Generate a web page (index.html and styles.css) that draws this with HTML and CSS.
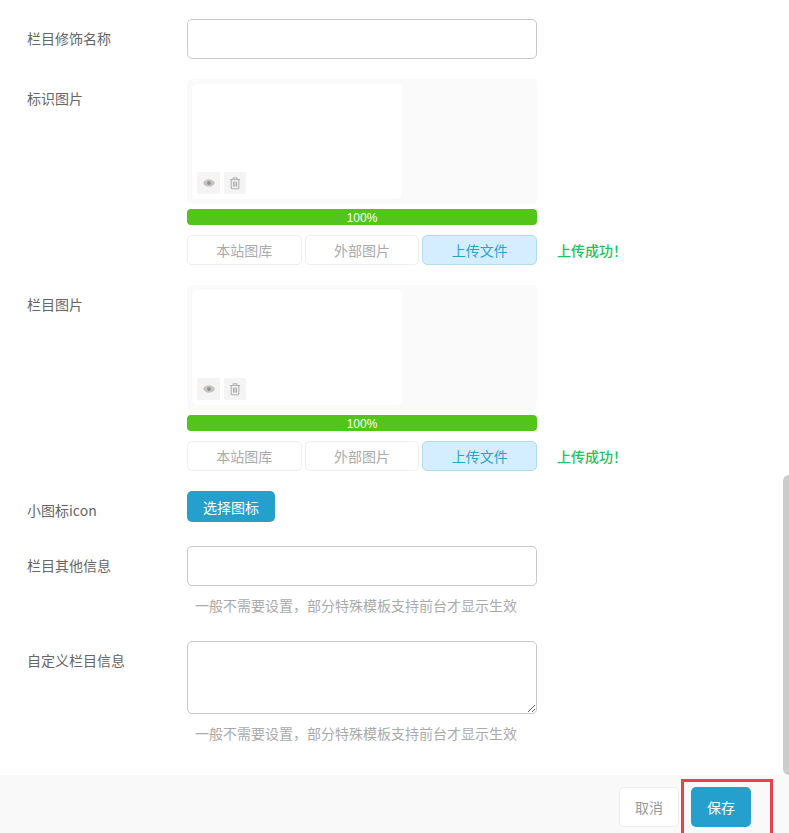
FILE: index.html
```html
<!DOCTYPE html>
<html lang="zh-CN">
<head>
<meta charset="utf-8">
<title>栏目设置</title>
<link rel="stylesheet" href="styles.css">
</head>
<body>
<div class="page">
  <form class="form">
    <div class="row">
      <label class="label label-input">栏目修饰名称</label>
      <div class="control"><input class="input" type="text"></div>
    </div>
    <div class="row">
      <label class="label label-top">标识图片</label>
      <div class="control-wide">
        <div class="control">
          <div class="preview">
            <div class="thumb">
              <span class="tool"><svg class="icon" viewBox="0 0 14 14"><path class="eye" d="M1 7c1.6-2.6 3.6-3.8 6-3.8s4.400 1.200 6 3.800c-1.600 2.600-3.600 3.800-6 3.800S2.600 9.600 1 7z"/><circle class="pupil" cx="7" cy="7" r="2.300"/></svg></span>
              <span class="tool tool-narrow"><svg class="icon" viewBox="0 0 14 14"><path class="trash" d="M2 3.500h10M5.200 3.500V1.700h3.600v1.800M3.200 3.500v8.300c0 .6.400 1 1 1h5.600c.6 0 1-.4 1-1V3.500M5.500 5.500v5.300M7 5.500v5.300M8.500 5.500v5.300"/></svg></span>
            </div>
          </div>
          <div class="progress">100%</div>
        </div>
        <div class="tabs-line">
          <div class="tabs">
            <button class="tab" type="button">本站图库</button>
            <button class="tab" type="button">外部图片</button>
            <button class="tab tab-active" type="button">上传文件</button>
          </div>
          <span class="success">上传成功！</span>
        </div>
      </div>
    </div>
    <div class="row">
      <label class="label label-top">栏目图片</label>
      <div class="control-wide">
        <div class="control">
          <div class="preview">
            <div class="thumb">
              <span class="tool"><svg class="icon" viewBox="0 0 14 14"><path class="eye" d="M1 7c1.6-2.6 3.6-3.8 6-3.8s4.400 1.200 6 3.800c-1.600 2.600-3.600 3.800-6 3.800S2.600 9.600 1 7z"/><circle class="pupil" cx="7" cy="7" r="2.300"/></svg></span>
              <span class="tool tool-narrow"><svg class="icon" viewBox="0 0 14 14"><path class="trash" d="M2 3.500h10M5.200 3.500V1.700h3.600v1.800M3.200 3.500v8.300c0 .6.400 1 1 1h5.600c.6 0 1-.4 1-1V3.500M5.500 5.500v5.300M7 5.500v5.300M8.500 5.500v5.300"/></svg></span>
            </div>
          </div>
          <div class="progress">100%</div>
        </div>
        <div class="tabs-line">
          <div class="tabs">
            <button class="tab" type="button">本站图库</button>
            <button class="tab" type="button">外部图片</button>
            <button class="tab tab-active" type="button">上传文件</button>
          </div>
          <span class="success">上传成功！</span>
        </div>
      </div>
    </div>
    <div class="row">
      <label class="label label-icon">小图标icon</label>
      <div class="control"><button class="pick" type="button">选择图标</button></div>
    </div>
    <div class="row row-info">
      <label class="label label-input">栏目其他信息</label>
      <div class="control">
        <input class="input" type="text">
        <p class="hint">一般不需要设置，部分特殊模板支持前台才显示生效</p>
      </div>
    </div>
    <div class="row row-custom">
      <label class="label label-input">自定义栏目信息</label>
      <div class="control">
        <textarea class="area"></textarea>
        <p class="hint">一般不需要设置，部分特殊模板支持前台才显示生效</p>
      </div>
    </div>
  </form>
  <div class="scrollbar"></div>
  <footer class="footer">
    <button class="btn-cancel" type="button">取消</button>
    <button class="btn-save" type="button">保存</button>
    <div class="highlight"></div>
  </footer>
</div>
</body>
</html>
```

FILE: styles.css
```css
* { box-sizing: border-box; }
html, body { margin: 0; padding: 0; }
body {
  font-family: "Noto Sans CJK SC", "Liberation Sans", sans-serif;
  font-size: 14px;
  color: #666;
  background: #fff;
}
.page {
  position: relative;
  width: 789px;
  height: 833px;
  overflow: hidden;
  display: flex;
  flex-direction: column;
}
.form {
  flex: 1;
  padding: 19px 0 0 27px;
  display: flex;
  flex-direction: column;
  gap: 20px;
}
.row { display: flex; align-items: flex-start; }
.label {
  width: 160px;
  flex: none;
  font-size: 14px;
  line-height: 20px;
  color: #666;
}
.label-input { padding-top: 9px; }
.label-top { padding-top: 9px; }
.label-icon { padding-top: 9px; }
.control { width: 350px; flex: none; }
.control-wide { display: flex; flex-direction: column; gap: 10px; }
.input {
  display: block;
  width: 350px;
  height: 40px;
  border: 1px solid #c9c9c9;
  border-radius: 5px;
  background: #fff;
  outline: none;
}
.area {
  display: block;
  width: 350px;
  height: 73px;
  border: 1px solid #c9c9c9;
  border-radius: 5px;
  background: #fff;
  outline: none;
  resize: vertical;
}
.preview {
  height: 125px;
  padding: 5px;
  background: #fafafa;
  border-radius: 5px;
}
.thumb {
  width: 210px;
  height: 115px;
  padding: 88px 0 0 5px;
  background: #fff;
  border-radius: 5px;
  display: flex;
  gap: 4px;
  align-items: flex-start;
}
.tool {
  width: 23px;
  height: 22px;
  background: #f4f4f4;
  border-radius: 2px;
  display: flex;
  align-items: center;
  justify-content: center;
}
.tool-narrow { width: 22px; }
.icon { width: 14px; height: 14px; display: block; }
.eye { fill: #c9c2bb; stroke: none; }
.pupil { fill: #8f8f95; stroke: #d8d8d8; stroke-width: .5; }
.trash { fill: none; stroke: #aeb0ae; stroke-width: 1.100; }
.progress {
  height: 16px;
  margin-top: 5px;
  background: #52c41a;
  border-radius: 4px;
  color: #fff;
  font-family: "Liberation Sans", sans-serif;
  font-size: 12px;
  line-height: 18px;
  text-align: center;
}
.tabs-line { display: flex; align-items: center; gap: 20px; }
.tabs { width: 350px; display: flex; gap: 3px; }
.tab {
  flex: 1;
  height: 30px;
  padding: 0;
  border: 1px solid #eee;
  border-radius: 5px;
  background: #fff;
  color: #aaa;
  font: inherit;
  font-size: 14px;
}
.tab-active {
  background: #d5eeff;
  border-color: #b3dbf2;
  color: #26a2cd;
}
.success { color: #1ac45f; font-size: 14px; font-weight: 500; line-height: 20px; }
.pick {
  display: block;
  width: 88px;
  height: 31px;
  padding: 0;
  border: 0;
  border-radius: 5px;
  background: #25a0cc;
  color: #fff;
  font: inherit;
  font-size: 14px;
}
.row-info { margin-top: 4px; }
.row-custom { margin-top: 6px; }
.hint {
  margin: 9px 0 0;
  padding-left: 8px;
  font-size: 14px;
  line-height: 20px;
  color: #aaa;
}
.scrollbar {
  position: absolute;
  right: 0;
  top: 475px;
  width: 6px;
  height: 300px;
  background: #ccc;
  border-radius: 6px 0 0 6px;
}
.footer {
  position: relative;
  flex: none;
  height: 58px;
  background: #f9f9f9;
  padding: 12px 38px 0 0;
  display: flex;
  justify-content: flex-end;
  align-items: flex-start;
  gap: 12px;
}
.btn-cancel, .btn-save {
  width: 60px;
  height: 40px;
  padding: 0;
  border-radius: 5px;
  font: inherit;
  font-size: 14px;
}
.btn-cancel { background: #fff; border: 1px solid #eee; color: #999; }
.btn-save { background: #25a0cc; border: 0; color: #fff; }
.highlight {
  position: absolute;
  left: 681px;
  top: 4px;
  width: 92px;
  height: 60px;
  border: 3px solid #e8434a;
}
```
